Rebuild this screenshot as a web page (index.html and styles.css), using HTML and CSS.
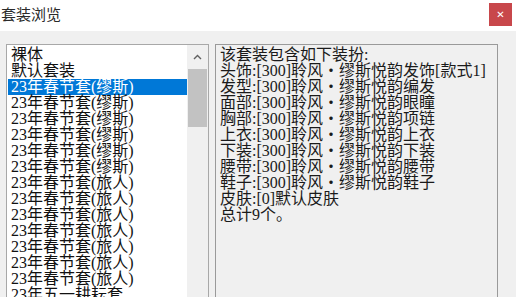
FILE: index.html
```html
<!DOCTYPE html>
<html lang="zh-CN">
<head>
<meta charset="UTF-8" />
<title>套装浏览</title>
<link rel="stylesheet" href="styles.css">
</head>
<body>

<header class="titlebar">
  <span class="title">套装浏览</span>
  <button class="close" type="button">&#x2715;</button>
</header>

<!-- ---------- MAIN ---------- -->
<div class="main">
  <div class="listbox">
    <ul class="items">
      <li>裸体</li>
      <li>默认套装</li>
      <li class="sel">23年春节套(缪斯)</li>
      <li>23年春节套(缪斯)</li>
      <li>23年春节套(缪斯)</li>
      <li>23年春节套(缪斯)</li>
      <li>23年春节套(缪斯)</li>
      <li>23年春节套(缪斯)</li>
      <li>23年春节套(旅人)</li>
      <li>23年春节套(旅人)</li>
      <li>23年春节套(旅人)</li>
      <li>23年春节套(旅人)</li>
      <li>23年春节套(旅人)</li>
      <li>23年春节套(旅人)</li>
      <li>23年春节套(旅人)</li>
      <li>23年五一耕耘套</li>
    </ul>
    <div class="scrollbar">
      <div class="arrow"><svg width="9" height="6" viewBox="0 0 9 6"><path d="M1 5 L4.5 1.5 L8 5" fill="none" stroke="#606060" stroke-width="1.4"/></svg></div>
      <div class="thumb"></div>
    </div>
  </div>

  <div class="detail">
    <div>该套装包含如下装扮:</div>
    <div>头饰:[300]聆风・缪斯悦韵发饰[款式1]</div>
    <div>发型:[300]聆风・缪斯悦韵编发</div>
    <div>面部:[300]聆风・缪斯悦韵眼瞳</div>
    <div>胸部:[300]聆风・缪斯悦韵项链</div>
    <div>上衣:[300]聆风・缪斯悦韵上衣</div>
    <div>下装:[300]聆风・缪斯悦韵下装</div>
    <div>腰带:[300]聆风・缪斯悦韵腰带</div>
    <div>鞋子:[300]聆风・缪斯悦韵鞋子</div>
    <div>皮肤:[0]默认皮肤</div>
    <div>总计9个。</div>
  </div>
</div>

</body>
</html>
```

FILE: styles.css
```css
/* ---- window ---- */
body{background:#f0f0f0;margin:0;padding:0;overflow:hidden;height:297px}
.titlebar{height:31px;background:#fff;display:flex;align-items:flex-start;justify-content:space-between}
.title{font-family:"Noto Sans CJK SC",sans-serif;font-size:15px;line-height:15px;color:#2a2a2a;margin:6px 0 0 1px}
.close{width:23px;height:23px;margin:3px 4px 0 0;background:#c8474b;color:#fff;border:none;padding:0;font-size:10px;font-family:"DejaVu Sans",sans-serif;font-weight:bold;line-height:23px;cursor:pointer}

/* ---- content ---- */
.main{display:flex;align-items:flex-start;padding:13px 0 0 6px;height:253px;overflow:hidden}
.listbox{width:201px;height:270px;background:#fff;border:1px solid #a8a8a8;display:flex}
.items{list-style:none;margin:0;padding:2px 0 0 1px;flex:1;font-family:"Liberation Serif","Noto Sans CJK SC",serif;font-size:16px;line-height:16px;color:#111;overflow:hidden}
.items li{padding-left:3px;height:16px;white-space:nowrap}
.items li.sel{background:#0078d7;color:#fff}
.scrollbar{width:21px;background:#f0f0f0;display:flex;flex-direction:column;align-items:center}
.arrow{height:24px;display:flex;align-items:center;justify-content:center}
.thumb{width:19px;height:58px;background:#c2c2c2}

.detail{margin-left:6px;width:277px;height:270px;border:1px solid #9a9a9a;padding:2px 0 0 4px;font-family:"Liberation Serif","Noto Sans CJK SC",serif;font-size:16px;line-height:16px;color:#1a1a1a;white-space:nowrap}
```
